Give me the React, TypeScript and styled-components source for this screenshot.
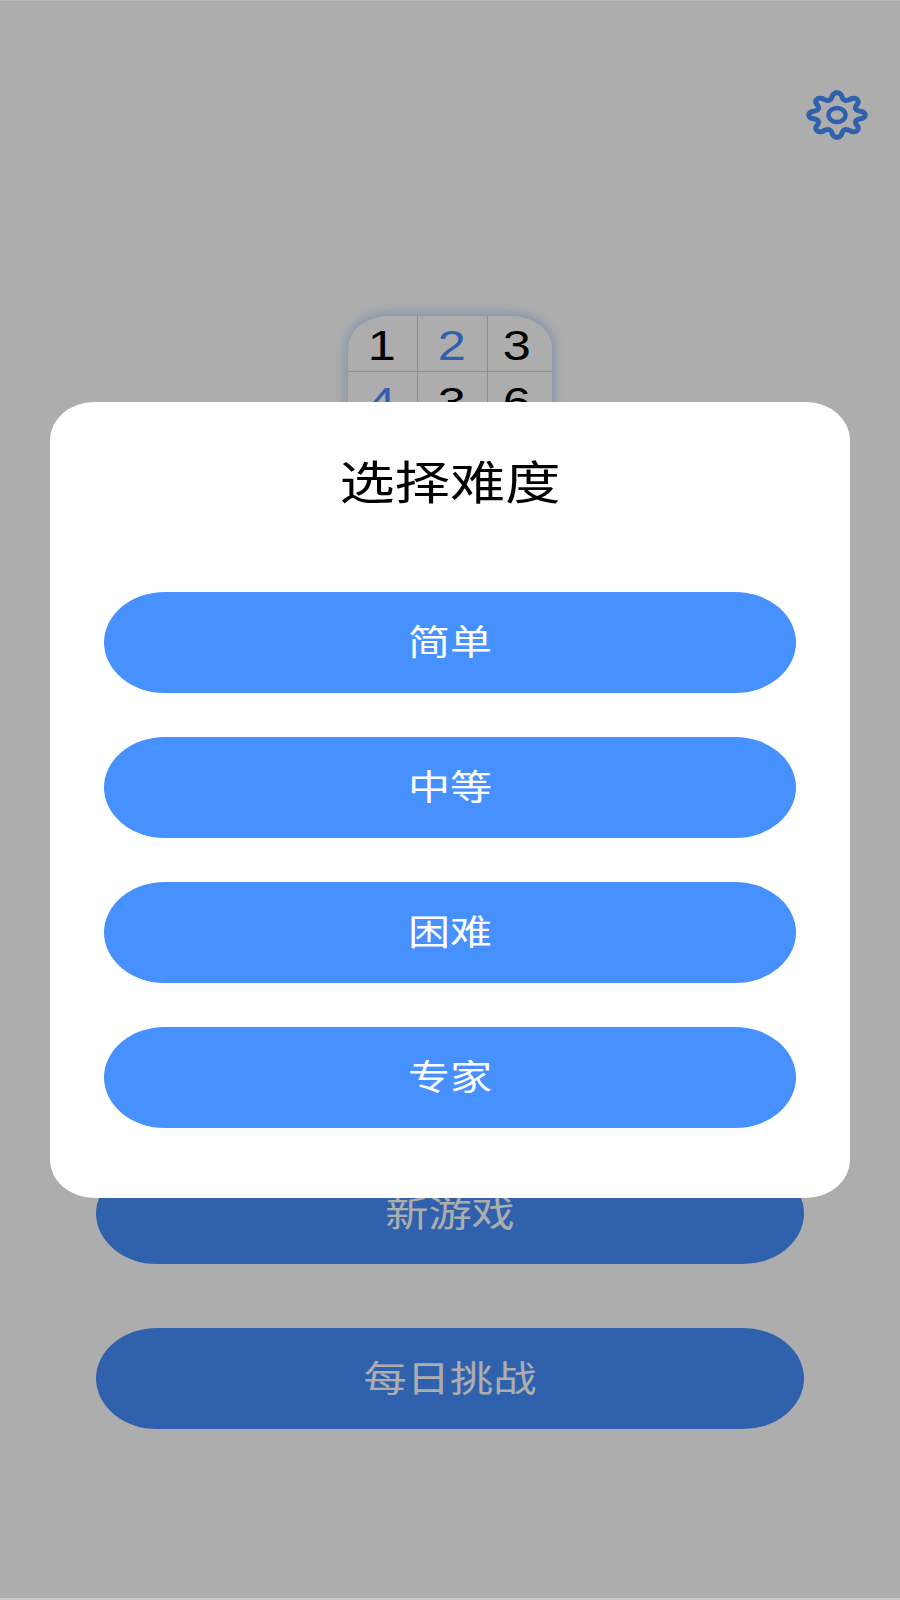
import React from "react";
import styled, { createGlobalStyle } from "styled-components";

const Global = createGlobalStyle`
  html, body { margin: 0; padding: 0; background: #fff; }
  * { box-sizing: border-box; }
`;

const FONT = `"Noto Sans CJK SC", "Noto Sans", "Liberation Sans", sans-serif`;

const Page = styled.div`
  position: relative;
  width: 900px;
  height: 1600px;
  overflow: hidden;
  background: #fff;
  display: flex;
  flex-direction: column;
  align-items: center;
  padding: 90px 0 171px;
  font-family: ${FONT};
`;

const Header = styled.header`
  align-self: stretch;
  display: flex;
  justify-content: flex-end;
  padding-right: 32px;
`;

const GearIcon = styled.svg`
  width: 62px;
  height: 50px;
  display: block;
`;

const Logo = styled.div`
  margin-top: 176px;
  width: 204px;
  display: grid;
  grid-template-columns: 70px 70px 64px;
  grid-auto-rows: 56px;
  border-radius: 40px 40px 0 0 / 32px 32px 0 0;
  overflow: hidden;
  background: #fff;
  box-shadow: 0 0 12px 2px rgba(70, 144, 255, 0.4);
`;

const Cell = styled.div<{ $accent?: boolean; $right?: boolean; $bottom?: boolean }>`
  display: flex;
  align-items: center;
  justify-content: center;
  padding-top: 5px;
  padding-right: ${(p) => (p.$right ? "2px" : "6px")};
  font-family: "Liberation Sans", Arial, sans-serif;
  font-size: 42px;
  color: ${(p) => (p.$accent ? "#4690ff" : "#000")};
  border-right: ${(p) => (p.$right ? "1px solid #d0d0d0" : "none")};
  border-bottom: ${(p) => (p.$bottom ? "1px solid #d0d0d0" : "none")};
`;

const Stretch = styled.span`
  display: inline-block;
  transform: scaleX(1.2);
`;

const MenuColumn = styled.div`
  margin-top: auto;
  display: flex;
  flex-direction: column;
  gap: 64px;
  width: 708px;
`;

const MenuButton = styled.button`
  height: 101px;
  border: none;
  border-radius: 61px / 50.5px;
  background: #4690ff;
  color: #fff;
  font-family: ${FONT};
  font-size: 36px;
  padding: 0 0 5px;
`;

const Scrim = styled.div`
  position: absolute;
  inset: 0;
  display: flex;
  align-items: center;
  justify-content: center;
  background: rgba(0, 0, 0, 0.32);
  box-shadow: inset 0 1px 0 rgba(255, 255, 255, 0.2), inset 0 -2px 0 rgba(255, 255, 255, 0.35);
`;

const Dialog = styled.div`
  width: 800px;
  height: 796px;
  border-radius: 44px / 38px;
  background: #fff;
  padding: 50px 54px 70px;
  display: flex;
  flex-direction: column;
`;

const Title = styled.h2`
  margin: 0 0 80px;
  height: 60px;
  line-height: 55px;
  text-align: center;
  font-size: 46px;
  font-weight: 400;
  color: #000;
`;

const Options = styled.div`
  display: flex;
  flex-direction: column;
  gap: 44px;
`;

const OptionButton = styled.button`
  height: 101px;
  border: none;
  border-radius: 61px / 50.5px;
  background: #4690ff;
  color: #fff;
  font-family: ${FONT};
  font-size: 35px;
  padding: 0 0 6px;
`;

function gearPath(): string {
  const cx = 31;
  const cy = 25;
  const steps = 240;
  const pts: string[] = [];
  for (let i = 0; i < steps; i++) {
    const t = (i / steps) * Math.PI * 2;
    const c = Math.cos(8 * t);
    const shaped = Math.sign(c) * Math.pow(Math.abs(c), 0.7);
    const r = 0.85 + 0.14 * shaped;
    const x = cx + Math.sin(t) * r * 28.5;
    const y = cy - Math.cos(t) * r * 22.5;
    pts.push(`${x.toFixed(2)} ${y.toFixed(2)}`);
  }
  return `M${pts.join("L")}Z`;
}

const digits = ["1", "2", "3", "4", "3", "6"];

export default function App() {
  return (
    <>
      <Global />
      <Page>
        <Header>
          <GearIcon viewBox="0 0 62 50" fill="none" stroke="#4690ff" strokeWidth="5">
            <path d={gearPath()} strokeLinejoin="round" />
            <ellipse cx="31" cy="25" rx="8.5" ry="7" strokeWidth="4.4" />
          </GearIcon>
        </Header>
        <Logo>
          {digits.map((d, i) => (
            <Cell key={i} $accent={i === 1 || i === 3} $right={i % 3 !== 2} $bottom={i < 3}>
              <Stretch>{d}</Stretch>
            </Cell>
          ))}
        </Logo>
        <MenuColumn>
          <MenuButton><Stretch>新游戏</Stretch></MenuButton>
          <MenuButton><Stretch>每日挑战</Stretch></MenuButton>
        </MenuColumn>
        <Scrim>
          <Dialog>
            <Title><Stretch>选择难度</Stretch></Title>
            <Options>
              {["简单", "中等", "困难", "专家"].map((label) => (
                <OptionButton key={label}><Stretch>{label}</Stretch></OptionButton>
              ))}
            </Options>
          </Dialog>
        </Scrim>
      </Page>
    </>
  );
}
